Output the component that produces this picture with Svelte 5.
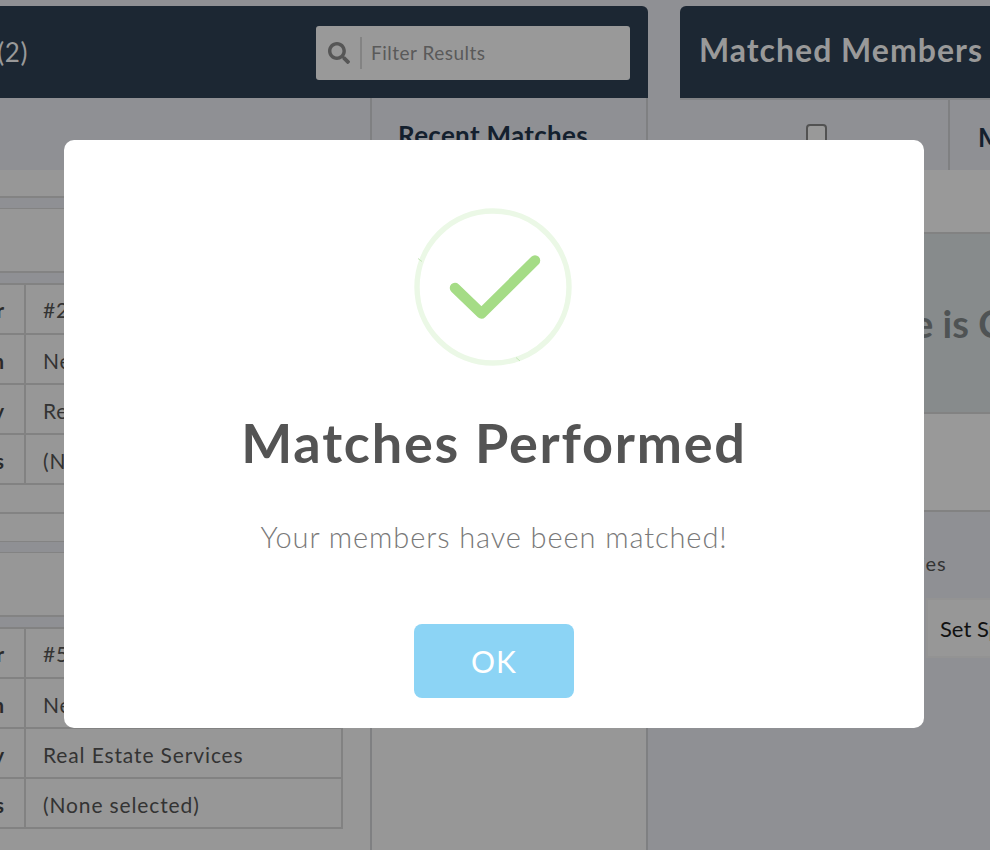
<script>
  const rows = [
    ['Member', '#2417'],
    ['Region', 'New York'],
    ['Industry', 'Real Estate Services'],
    ['Specialties', '(None selected)']
  ];
  const rows2 = [
    ['Member', '#5120'],
    ['Region', 'New York'],
    ['Industry', 'Real Estate Services'],
    ['Specialties', '(None selected)']
  ];
</script>

<div class="page">
  <section class="panel left">
    <header class="bar">
      <h2 class="dim">Available Members (2)</h2>
      <div class="filter">
        <svg class="mag" viewBox="0 0 512 512" aria-hidden="true"><path d="M505 442.700L405.300 343c-4.500-4.500-10.600-7-17-7H372c27.600-35.300 44-79.700 44-128C416 93.100 322.900 0 208 0S0 93.100 0 208s93.100 208 208 208c48.300 0 92.700-16.400 128-44v16.300c0 6.400 2.500 12.500 7 17l99.700 99.700c9.400 9.400 24.600 9.400 33.900 0l28.300-28.300c9.400-9.400 9.400-24.600.1-34zM208 336c-70.700 0-128-57.200-128-128 0-70.700 57.200-128 128-128 70.700 0 128 57.200 128 128 0 70.700-57.200 128-128 128z"/></svg>
        <span class="sep"></span>
        <span class="ph">Filter Results</span>
      </div>
    </header>
    <div class="cols">
      <div class="col-main">
        <div class="blank"></div>
        <div class="light">
          <div class="strip"></div>
          <div class="band"></div>
          <div class="card-head"></div>
          <div class="band"></div>
          <div class="table-wrap">
            <table>
              <tbody>
                {#each rows as r}
                  <tr><th>{r[0]}</th><td>{r[1]}</td></tr>
                {/each}
              </tbody>
            </table>
          </div>
          <div class="foot"></div>
          <div class="foot last"></div>
          <div class="band"></div>
          <div class="card-head"></div>
          <div class="band"></div>
          <div class="table-wrap">
            <table>
              <tbody>
                {#each rows2 as r}
                  <tr><th>{r[0]}</th><td>{r[1]}</td></tr>
                {/each}
              </tbody>
            </table>
          </div>
        </div>
      </div>
      <aside class="col-side"><h3>Recent Matches</h3></aside>
    </div>
  </section>

  <section class="panel right">
    <header class="bar"><h2>Matched Members</h2></header>
    <div class="thead">
      <div class="check-cell"><span class="check"></span></div>
      <div class="name-cell"><h3>Member</h3></div>
    </div>
    <div class="light-strip"></div>
    <div class="notice"><p>The Queue is Clear</p></div>
    <div class="light-block"></div>
    <div class="actions">
      <p>Specialties</p>
      <div class="btn-row"><button class="set">Set Specialties</button></div>
    </div>
  </section>
</div>

<div class="overlay">
  <div class="modal">
    <div class="icon">
      <svg viewBox="0 0 158 158" width="158" height="158" aria-hidden="true">
        <circle cx="79" cy="79" r="76" fill="none" stroke="#ebf8e6" stroke-width="5.400" />
        <path d="M4 50.500 L8 53.500" stroke="#c5e8b8" stroke-width="1" />
        <path d="M102 149.500 L106 153" stroke="#c5e8b8" stroke-width="1" />
        <path d="M41 80 L67.500 105.500 L121 52.500" fill="none" stroke="#a5dc86" stroke-width="10.500" stroke-linecap="round" stroke-linejoin="round" />
      </svg>
    </div>
    <h1>Matches Performed</h1>
    <p class="msg">Your members have been matched!</p>
    <button class="ok">OK</button>
  </div>
</div>

<style>
  :global(body) {
    margin: 0;
    background: #8f9094;
    overflow: hidden;
    font-family: "Lato", "Noto Sans", sans-serif;
  }
  .page {
    width: 990px;
    height: 850px;
    overflow: hidden;
    display: flex;
    gap: 32px;
    padding-top: 6px;
    box-sizing: border-box;
    color: #333;
  }
  .panel { flex: none; }
  .left { width: 1000px; margin-left: -352px; }
  .right { width: 600px; }
  .bar {
    height: 92px;
    background: #1c2733;
    border-radius: 6px 6px 0 0;
    display: flex;
    align-items: center;
    justify-content: space-between;
    padding: 0 18px 0 19px;
    box-sizing: border-box;
  }
  .bar h2 {
    margin: -5px 0 0;
    font-size: 32px;
    font-weight: 700;
    color: #999;
    letter-spacing: 1px;
    white-space: nowrap;
  }
  .right .bar { justify-content: flex-start; }
  .bar .dim {
    font-size: 26px;
    font-weight: 400;
    margin: 0 0 0 97px;
    letter-spacing: 0.55px;
  }
  .filter {
    width: 314px;
    height: 54px;
    margin-top: 2px;
    background: #999;
    border-radius: 3px;
    display: flex;
    align-items: center;
    padding-left: 12px;
    box-sizing: border-box;
  }
  .mag { width: 22px; height: 22px; fill: #565656; }
  .sep { width: 2px; height: 32px; background: #838383; margin: 0 9px 0 10px; }
  .ph { font-size: 19px; color: #5a5a5a; letter-spacing: 0.5px; margin-top: -2px; }
  .cols { display: flex; height: 752px; }
  .col-main { width: 722px; }
  .col-side {
    width: 278px;
    border-left: 2px solid #7f8082;
    border-right: 2px solid #7f8082;
    background: linear-gradient(#8f9094 0 72px, #979797 72px);
    box-sizing: border-box;
    padding-left: 26px;
  }
  .col-side h3, .name-cell h3 {
    margin: 0;
    padding-top: 21px;
    font-size: 26px;
    font-weight: 700;
    color: #14202e;
    white-space: nowrap;
    letter-spacing: 0.3px;
  }
  .blank { height: 72px; }
  .light { background: #979797; height: 680px; }
  .strip { height: 26px; border-bottom: 2px solid #838383; }
  .band { height: 10px; background: #8f9094; }
  .card-head { height: 65px; box-sizing: border-box; border-top: 1px solid #838383; border-bottom: 2px solid #838383; }
  .table-wrap { padding-right: 27px; }
  table {
    border-collapse: collapse;
    width: 100%;
    font-size: 21px;
  }
  tr { height: 50px; }
  th, td { border: 2px solid #828282; padding: 3px 17px 0; text-align: left; }
  tr:first-child th, tr:first-child td { padding-top: 0; }
  th { width: 337px; text-align: right; padding-right: 20px; font-weight: 700; color: #2a2a2a; }
  td { color: #333; font-weight: 400; letter-spacing: 0.87px; }
  .foot { height: 27px; border-bottom: 2px solid #838383; }
  .foot.last { height: 27px; border-bottom-width: 1px; }
  .thead { display: flex; height: 72px; border-top: 2px solid #828386; box-sizing: border-box; }
  .check-cell { width: 268px; border-right: 2px solid #7f8082; display: flex; justify-content: center; }
  .check {
    width: 17px; height: 19px; margin: 24px 0 0 5px;
    border: 2px solid #525252; border-radius: 4px; background: #999;
  }
  .name-cell { padding-left: 28px; }
  .light-strip { height: 62px; background: #999; }
  .notice { height: 182px; background: #878b8c; border-top: 2px solid #828282; border-bottom: 2px solid #828282; box-sizing: border-box; }
  .notice p { margin: 0; padding-top: 66px; padding-left: 66px; font-size: 38px; font-weight: 700; color: #4f5354; white-space: nowrap; }
  .light-block { height: 96px; background: #999; border-bottom: 2px solid #828282; }
  .actions p { margin: 0; padding: 39px 0 0 165px; font-size: 20px; letter-spacing: .8px; color: #333; height: 47px; }
  .btn-row { padding-left: 246px; }
  .set {
    height: 60px; width: 200px; background: #979797; border: 2px solid #939393; margin: 0;
    font-family: inherit; font-size: 22px; color: #111; text-align: left; padding-left: 12px;
  }
  .overlay {
    position: fixed;
    inset: 0;
    display: flex;
    align-items: flex-start;
    justify-content: center;
    padding-top: 140px;
    box-sizing: border-box;
    pointer-events: none;
  }
  .modal {
    width: 860px;
    height: 588px;
    margin-left: -2px;
    background: #fff;
    border-radius: 10px;
    text-align: center;
    box-sizing: border-box;
    padding-top: 68px;
  }
  .icon { height: 158px; padding-right: 2px; }
  .icon svg { display: block; margin: 0 auto; }
  h1 {
    margin: 41px 0 0;
    font-size: 54px;
    line-height: 72px;
    font-weight: 700;
    color: #545454;
    letter-spacing: 1.8px;
  }
  .msg {
    margin: 40px 0 0;
    font-size: 29px;
    line-height: 36px;
    font-weight: 300;
    color: #797979;
    letter-spacing: 0.9px;
  }
  .ok {
    display: block;
    margin: 69px auto 0;
    width: 160px;
    height: 74px;
    border: none;
    border-radius: 8px;
    background: #8cd4f5;
    color: #fff;
    font-family: inherit;
    font-size: 30px;
    font-weight: 400;
    letter-spacing: 1px;
  }
</style>
